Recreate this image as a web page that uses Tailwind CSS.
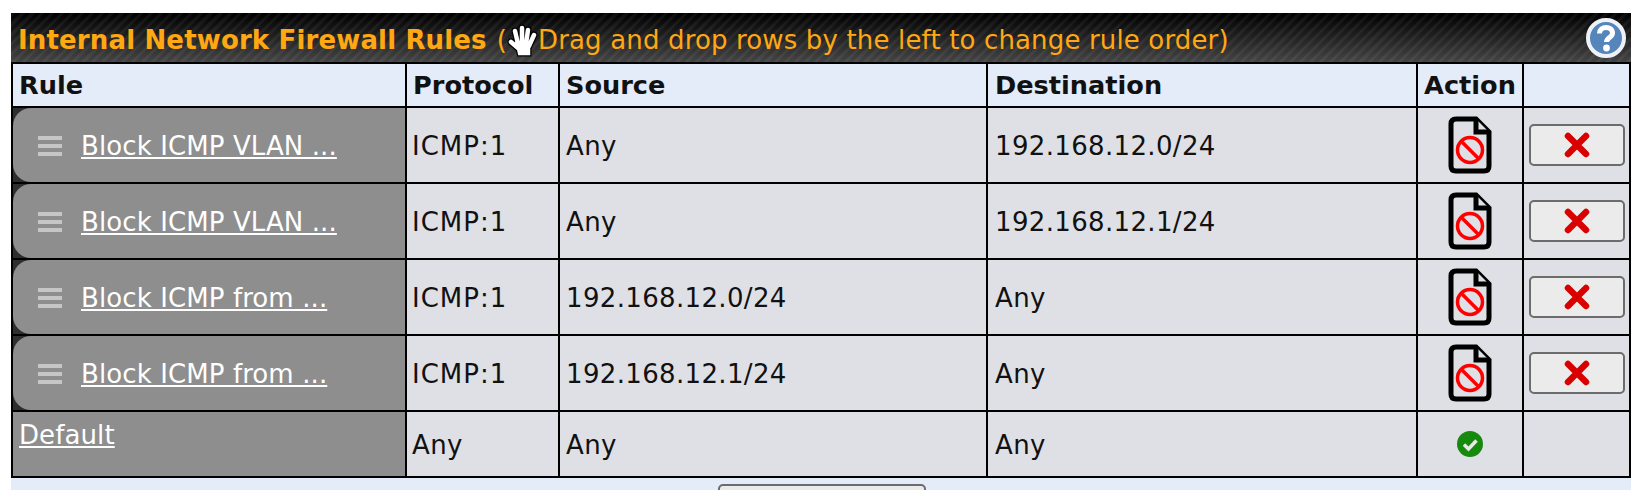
<!DOCTYPE html>
<html lang="en">
<head>
    <meta charset="UTF-8">
    <title>Internal Network Firewall Rules</title>
    <script src="https://cdn.jsdelivr.net/npm/@tailwindcss/browser@4"></script>
</head>
<body class="bg-white h-[490px] overflow-hidden font-['DejaVu_Sans',sans-serif] text-[26px] tracking-[0.35px] text-[#111]">

    <div class="ml-[11px] mt-[13px] w-[1620px]">
        <!-- Title bar -->
        <div class="h-[49px] flex items-center justify-between pl-[7px] pr-[5px] text-[#ffa812] bg-[repeating-linear-gradient(135deg,rgba(255,255,255,0.05)_0px,rgba(255,255,255,0.05)_3px,transparent_3px,transparent_7px),linear-gradient(180deg,#000_0%,#444_100%)]">
            <div class="flex items-center pt-[6px] tracking-[0.15px]">
                <span class="font-bold">Internal Network Firewall Rules</span>
                <span class="ml-[10px]">(</span>
                <svg width="32" height="34" viewBox="0 0 32 34" class="-ml-[1px]">
                    <g stroke="#000" stroke-width="7" stroke-linecap="round" fill="none"><path d="M12 24 L5 18 M12 20 L9 7 M16 20 L16 4 M20 20 L22 6 M23 22 L28 11"/><path d="M12 20 H22 V29 H14 Z"/></g>
                    <g stroke="#fff" stroke-width="4.5" stroke-linecap="round" fill="#fff"><path d="M12 24 L5 18 M12 20 L9 7 M16 20 L16 4 M20 20 L22 6 M23 22 L28 11"/><path d="M12 20 H22 V29 H14 Z"/></g>
                </svg>
                <span>Drag and drop rows by the left to change rule order)</span>
            </div>
            <svg width="40" height="40" viewBox="0 0 40 40">
                <circle cx="20" cy="20" r="18" fill="#5585bb" stroke="#eef2f8" stroke-width="4"/>
                <path d="M13.5 15.5 C13.5 7.5 26.5 7.5 26.5 15 C26.5 19.5 20.5 19.5 20.5 24" fill="none" stroke="#fff" stroke-width="5"/>
                <circle cx="20.5" cy="30" r="3.4" fill="#fff"/>
            </svg>
        </div>

        <!-- Rules table -->
        <table class="w-full table-fixed border-collapse border-t-2 border-black">
            <colgroup>
                <col class="w-[394px]">
                <col class="w-[153px]">
                <col class="w-[428px]">
                <col class="w-[430px]">
                <col class="w-[106px]">
                <col>
            </colgroup>
            <thead>
                <tr class="h-[44px] bg-[#e4ebf9] font-bold text-left text-[25.6px] tracking-normal">
                    <th class="border-2 border-black pl-[6px]">Rule</th>
                    <th class="border-2 border-black pl-[6px]">Protocol</th>
                    <th class="border-2 border-black pl-[6px]">Source</th>
                    <th class="border-2 border-black pl-[7px]">Destination</th>
                    <th class="border-2 border-black text-center">Action</th>
                    <th class="border-2 border-black"></th>
                </tr>
            </thead>
            <tbody class="bg-[#dfe0e5]">
                <tr class="h-[76px]">
                    <td class="border-2 border-black p-0 bg-[#2e2e2e]">
                        <div class="h-[74px] flex items-center gap-[19px] pl-[25px] pt-[2px] bg-[#8e8e8e] rounded-l-[18px] text-white tracking-[0.1px]">
                            <span class="w-[24px] h-[20px] flex flex-col justify-between"><i class="h-[4px] bg-[#c6c6c6]"></i><i class="h-[4px] bg-[#c6c6c6]"></i><i class="h-[4px] bg-[#c6c6c6]"></i></span>
                            <a href="#" class="underline">Block ICMP VLAN ...</a>
                        </div>
                    </td>
                    <td class="border-2 border-black pl-[5px] pt-[3px] tracking-[1px]">ICMP:1</td>
                    <td class="border-2 border-black pl-[6px] pt-[3px]">Any</td>
                    <td class="border-2 border-black pl-[7px] pt-[3px]">192.168.12.0/24</td>
                    <td class="border-2 border-black">
                        <svg width="44" height="58" viewBox="0 0 44 58" class="mx-auto"><path d="M8 3 H28 L41 16 V50 Q41 55 36 55 H8 Q3 55 3 50 V8 Q3 3 8 3 Z" fill="none" stroke="#000" stroke-width="5"/><path d="M28 3 V16 H41" fill="#dfe0e5" stroke="#000" stroke-width="5"/><circle cx="22" cy="34" r="12.5" fill="none" stroke="#f00" stroke-width="3.5"/><path d="M13 25 L31 43" stroke="#f00" stroke-width="3.5"/></svg>
                    </td>
                    <td class="border-2 border-black">
                        <button class="block mx-auto w-[96px] h-[42px] bg-[#ebebeb] border-2 border-[#6c6c6c] rounded-[5px]">
                            <svg width="26" height="26" viewBox="0 0 26 26" class="mx-auto"><path d="M4 4 L22 22 M22 4 L4 22" stroke="#d90000" stroke-width="6.5" stroke-linecap="round"/></svg>
                        </button>
                    </td>
                </tr>
                <tr class="h-[76px]">
                    <td class="border-2 border-black p-0 bg-[#2e2e2e]">
                        <div class="h-[74px] flex items-center gap-[19px] pl-[25px] pt-[2px] bg-[#8e8e8e] rounded-l-[18px] text-white tracking-[0.1px]">
                            <span class="w-[24px] h-[20px] flex flex-col justify-between"><i class="h-[4px] bg-[#c6c6c6]"></i><i class="h-[4px] bg-[#c6c6c6]"></i><i class="h-[4px] bg-[#c6c6c6]"></i></span>
                            <a href="#" class="underline">Block ICMP VLAN ...</a>
                        </div>
                    </td>
                    <td class="border-2 border-black pl-[5px] pt-[3px] tracking-[1px]">ICMP:1</td>
                    <td class="border-2 border-black pl-[6px] pt-[3px]">Any</td>
                    <td class="border-2 border-black pl-[7px] pt-[3px]">192.168.12.1/24</td>
                    <td class="border-2 border-black">
                        <svg width="44" height="58" viewBox="0 0 44 58" class="mx-auto"><path d="M8 3 H28 L41 16 V50 Q41 55 36 55 H8 Q3 55 3 50 V8 Q3 3 8 3 Z" fill="none" stroke="#000" stroke-width="5"/><path d="M28 3 V16 H41" fill="#dfe0e5" stroke="#000" stroke-width="5"/><circle cx="22" cy="34" r="12.5" fill="none" stroke="#f00" stroke-width="3.5"/><path d="M13 25 L31 43" stroke="#f00" stroke-width="3.5"/></svg>
                    </td>
                    <td class="border-2 border-black">
                        <button class="block mx-auto w-[96px] h-[42px] bg-[#ebebeb] border-2 border-[#6c6c6c] rounded-[5px]">
                            <svg width="26" height="26" viewBox="0 0 26 26" class="mx-auto"><path d="M4 4 L22 22 M22 4 L4 22" stroke="#d90000" stroke-width="6.5" stroke-linecap="round"/></svg>
                        </button>
                    </td>
                </tr>
                <tr class="h-[76px]">
                    <td class="border-2 border-black p-0 bg-[#2e2e2e]">
                        <div class="h-[74px] flex items-center gap-[19px] pl-[25px] pt-[2px] bg-[#8e8e8e] rounded-l-[18px] text-white tracking-[0.1px]">
                            <span class="w-[24px] h-[20px] flex flex-col justify-between"><i class="h-[4px] bg-[#c6c6c6]"></i><i class="h-[4px] bg-[#c6c6c6]"></i><i class="h-[4px] bg-[#c6c6c6]"></i></span>
                            <a href="#" class="underline">Block ICMP from ...</a>
                        </div>
                    </td>
                    <td class="border-2 border-black pl-[5px] pt-[3px] tracking-[1px]">ICMP:1</td>
                    <td class="border-2 border-black pl-[6px] pt-[3px]">192.168.12.0/24</td>
                    <td class="border-2 border-black pl-[7px] pt-[3px]">Any</td>
                    <td class="border-2 border-black">
                        <svg width="44" height="58" viewBox="0 0 44 58" class="mx-auto"><path d="M8 3 H28 L41 16 V50 Q41 55 36 55 H8 Q3 55 3 50 V8 Q3 3 8 3 Z" fill="none" stroke="#000" stroke-width="5"/><path d="M28 3 V16 H41" fill="#dfe0e5" stroke="#000" stroke-width="5"/><circle cx="22" cy="34" r="12.5" fill="none" stroke="#f00" stroke-width="3.5"/><path d="M13 25 L31 43" stroke="#f00" stroke-width="3.5"/></svg>
                    </td>
                    <td class="border-2 border-black">
                        <button class="block mx-auto w-[96px] h-[42px] bg-[#ebebeb] border-2 border-[#6c6c6c] rounded-[5px]">
                            <svg width="26" height="26" viewBox="0 0 26 26" class="mx-auto"><path d="M4 4 L22 22 M22 4 L4 22" stroke="#d90000" stroke-width="6.5" stroke-linecap="round"/></svg>
                        </button>
                    </td>
                </tr>
                <tr class="h-[76px]">
                    <td class="border-2 border-black p-0 bg-[#2e2e2e]">
                        <div class="h-[74px] flex items-center gap-[19px] pl-[25px] pt-[2px] bg-[#8e8e8e] rounded-l-[18px] text-white tracking-[0.1px]">
                            <span class="w-[24px] h-[20px] flex flex-col justify-between"><i class="h-[4px] bg-[#c6c6c6]"></i><i class="h-[4px] bg-[#c6c6c6]"></i><i class="h-[4px] bg-[#c6c6c6]"></i></span>
                            <a href="#" class="underline">Block ICMP from ...</a>
                        </div>
                    </td>
                    <td class="border-2 border-black pl-[5px] pt-[3px] tracking-[1px]">ICMP:1</td>
                    <td class="border-2 border-black pl-[6px] pt-[3px]">192.168.12.1/24</td>
                    <td class="border-2 border-black pl-[7px] pt-[3px]">Any</td>
                    <td class="border-2 border-black">
                        <svg width="44" height="58" viewBox="0 0 44 58" class="mx-auto"><path d="M8 3 H28 L41 16 V50 Q41 55 36 55 H8 Q3 55 3 50 V8 Q3 3 8 3 Z" fill="none" stroke="#000" stroke-width="5"/><path d="M28 3 V16 H41" fill="#dfe0e5" stroke="#000" stroke-width="5"/><circle cx="22" cy="34" r="12.5" fill="none" stroke="#f00" stroke-width="3.5"/><path d="M13 25 L31 43" stroke="#f00" stroke-width="3.5"/></svg>
                    </td>
                    <td class="border-2 border-black">
                        <button class="block mx-auto w-[96px] h-[42px] bg-[#ebebeb] border-2 border-[#6c6c6c] rounded-[5px]">
                            <svg width="26" height="26" viewBox="0 0 26 26" class="mx-auto"><path d="M4 4 L22 22 M22 4 L4 22" stroke="#d90000" stroke-width="6.5" stroke-linecap="round"/></svg>
                        </button>
                    </td>
                </tr>
                <tr class="h-[66px]">
                    <td class="border-2 border-black bg-[#8e8e8e] pl-[6px] pb-[18px] text-white tracking-[0.1px]"><a href="#" class="underline">Default</a></td>
                    <td class="border-2 border-black pl-[5px] pt-[2px]">Any</td>
                    <td class="border-2 border-black pl-[6px] pt-[2px]">Any</td>
                    <td class="border-2 border-black pl-[7px] pt-[2px]">Any</td>
                    <td class="border-2 border-black">
                        <svg width="26" height="26" viewBox="0 0 26 26" class="mx-auto"><circle cx="13" cy="13" r="13" fill="#158a0c"/><path d="M7 13.5 L11.5 18 L19.5 9.5" fill="none" stroke="#e8e8e8" stroke-width="3.5"/></svg>
                    </td>
                    <td class="border-2 border-black"></td>
                </tr>
            </tbody>
        </table>

        <!-- Save button row, cut off by the window -->
        <div class="h-[40px] bg-[#e4ebf9] pt-[6px]">
            <button class="block ml-[707px] w-[208px] h-[40px] bg-[#ebebeb] border-2 border-[#6c6c6c] rounded-[5px]"></button>
        </div>
    </div>

</body>
</html>
